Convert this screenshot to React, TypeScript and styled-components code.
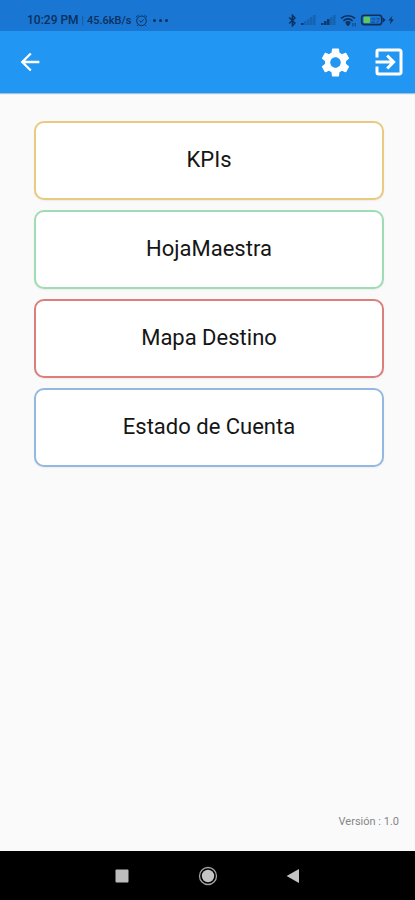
import React from 'react';
import styled, {createGlobalStyle} from 'styled-components';
import {MdArrowBack, MdExitToApp, MdSettings} from 'react-icons/md';

interface MenuItemType {
    label: string;
    color: string;
}

const menuItems: MenuItemType[] = [
    {label: 'KPIs', color: '#e8ca80'},
    {label: 'HojaMaestra', color: '#9fdcb4'},
    {label: 'Mapa Destino', color: '#da7f7a'},
    {label: 'Estado de Cuenta', color: '#93b9e3'},
]

const AlarmIcon = () => (
    <svg width="13" height="13" viewBox="0 0 13 13" fill="none" stroke="currentColor" strokeWidth="1">
        <circle cx="6.5" cy="6.8" r="4.8"/>
        <path d="M1 3.2 3.4 1.2M12 3.2 9.6 1.2M4.4 6.6 6.2 8.2 8.8 5.4M3 11 2 12M10 11l1 1"/>
    </svg>
)

const BluetoothIcon = () => (
    <svg width="9" height="13" viewBox="0 0 9 13" fill="none" stroke="currentColor" strokeWidth="1.4">
        <path d="M1.2 3.6 7 9 4.4 11.7V1.3L7 4 1.2 9.4"/>
    </svg>
)

const SignalIcon = ({level}: { level: number }) => (
    <svg width="17" height="11" viewBox="0 0 17 11" fill="currentColor">
        {[0, 1, 2, 3, 4].map((bar) => (
            <rect
                key={bar}
                x={1 + bar * 3}
                y={8 - bar * 2}
                width="2.6"
                height={2 + bar * 2}
                opacity={bar < level ? 0.85 : 0.25}
            />
        ))}
    </svg>
)

const WifiIcon = () => (
    <svg width="17" height="13" viewBox="0 0 17 13" fill="none" stroke="currentColor" strokeWidth="1.6">
        <path d="M1 4.4C5 .8 11 .8 15 4.4M3.4 6.8c2.8-2.4 6.4-2.4 9.2 0M5.7 9c1.4-1.3 3.2-1.3 4.6 0"/>
        <path d="M8 12 6 9.6h4ZM13 9v3.4M15.2 9v3.4" fill="currentColor" strokeWidth=".7"/>
    </svg>
)

const BatteryIcon = () => (
    <svg width="35" height="12" viewBox="0 0 35 12">
        <rect x="1.7" y="1.2" width="20" height="9.4" rx="2.6" fill="none" stroke="currentColor" strokeWidth="1.6"/>
        <rect x="3.6" y="2.8" width="6.4" height="6.2" rx="1" fill="#62c957"/>
        <path d="M22.6 3.2 25.6 6l-3 2.8Z" fill="currentColor"/>
        <text x="11" y="9" fontSize="8" fontFamily="Roboto, sans-serif" fill="currentColor" opacity=".65">27</text>
        <path d="M32.4 1.8 28.4 6.6h2.4L29.8 10.4 33.8 5.4h-2.4Z" fill="currentColor"/>
    </svg>
)

const App = () => {
    return (
        <>
            <GlobalStyle/>
            <Screen>
                <StatusBar>
                    <StatusGroup>
                        <Clock>10:29 PM</Clock>
                        <Separator>|</Separator>
                        <Speed>45.6kB/s</Speed>
                        <AlarmIcon/>
                        <Dots>
                            <Dot/>
                            <Dot/>
                            <Dot/>
                        </Dots>
                    </StatusGroup>
                    <StatusGroup>
                        <BluetoothIcon/>
                        <SignalIcon level={1}/>
                        <SignalIcon level={3}/>
                        <WifiIcon/>
                        <BatteryIcon/>
                    </StatusGroup>
                </StatusBar>
                <AppBar>
                    <IconButton type="button" aria-label="Volver">
                        <MdArrowBack size={28}/>
                    </IconButton>
                    <Actions>
                        <IconButton type="button" aria-label="Ajustes">
                            <MdSettings size={35}/>
                        </IconButton>
                        <IconButton type="button" aria-label="Salir">
                            <MdExitToApp size={36}/>
                        </IconButton>
                    </Actions>
                </AppBar>
                <Menu>
                    {menuItems.map((item) => (
                        <MenuButton key={item.label} type="button" $color={item.color}>{item.label}</MenuButton>
                    ))}
                </Menu>
                <Version>Versión : 1.0</Version>
                <NavBar>
                    <NavButton type="button" aria-label="Recientes">
                        <svg width="20" height="20" viewBox="0 0 20 20">
                            <rect x="3.5" y="3.5" width="13" height="13" rx="1" fill="#bdbdbd"/>
                        </svg>
                    </NavButton>
                    <NavButton type="button" aria-label="Inicio">
                        <svg width="20" height="20" viewBox="0 0 20 20">
                            <circle cx="10" cy="10" r="8.5" fill="none" stroke="#a4a4a4" strokeWidth="1.3"/>
                            <circle cx="10" cy="10" r="6.2" fill="#c4c4c4"/>
                        </svg>
                    </NavButton>
                    <NavButton type="button" aria-label="Atrás">
                        <svg width="20" height="20" viewBox="0 0 20 20">
                            <path d="M2.6 10 15 3v14Z" fill="#c4c4c4"/>
                        </svg>
                    </NavButton>
                </NavBar>
            </Screen>
        </>
    );
};

const GlobalStyle = createGlobalStyle`
  * {
    box-sizing: border-box;
  }
  body {
    margin: 0;
    background: #fafafa;
    font-family: Roboto, sans-serif;
  }
  button {
    padding: 0;
    border: 0;
    background: none;
    font-family: inherit;
    cursor: pointer;
  }
  svg {
    display: block;
    flex-shrink: 0;
  }
`
const Screen = styled.div`
  display: flex;
  flex-direction: column;
  min-height: 100vh;
`
const StatusBar = styled.div`
  display: flex;
  align-items: center;
  justify-content: space-between;
  height: 31px;
  padding: 9px 20px 0 27px;
  background: #1976d2;
  color: #0d2f5c;
`
const StatusGroup = styled.div`
  display: flex;
  align-items: center;
  gap: 3px;
`
const Clock = styled.span`
  font-size: 12px;
  font-weight: 500;
`
const Separator = styled.span`
  font-size: 10px;
  opacity: 0.5;
`
const Speed = styled.span`
  font-size: 11px;
  font-weight: 500;
`
const Dots = styled.div`
  display: flex;
  gap: 3px;
  margin-left: 2px;
`
const Dot = styled.span`
  width: 3px;
  height: 3px;
  border-radius: 50%;
  background: currentColor;
`
const AppBar = styled.header`
  display: flex;
  align-items: center;
  justify-content: space-between;
  height: 62px;
  padding: 0 8px 0 16px;
  background: #2196f3;
  box-shadow: 0 1px 1px rgba(33, 110, 170, 0.4);
`
const Actions = styled.div`
  display: flex;
  align-items: center;
  gap: 18px;
`
const IconButton = styled.button`
  display: flex;
  color: #fff;
`
const Menu = styled.main`
  display: flex;
  flex: 1;
  flex-direction: column;
  gap: 10px;
  padding: 28px 31px 20px 34px;
`
const MenuButton = styled.button<{ $color: string }>`
  height: 79px;
  padding-bottom: 2px;
  border: 2px solid ${({$color}) => $color};
  border-radius: 10px;
  background: #fff;
  box-shadow: 0 1px 2px rgba(0, 0, 0, 0.06);
  color: #151515;
  font-size: 22px;
`
const Version = styled.footer`
  padding: 0 16px 22px;
  color: #868686;
  font-size: 11px;
  line-height: 14px;
  text-align: right;
`
const NavBar = styled.nav`
  display: flex;
  align-items: center;
  justify-content: center;
  gap: 66px;
  height: 49px;
  background: #000;
`
const NavButton = styled.button`
  display: flex;
`
export default App;
